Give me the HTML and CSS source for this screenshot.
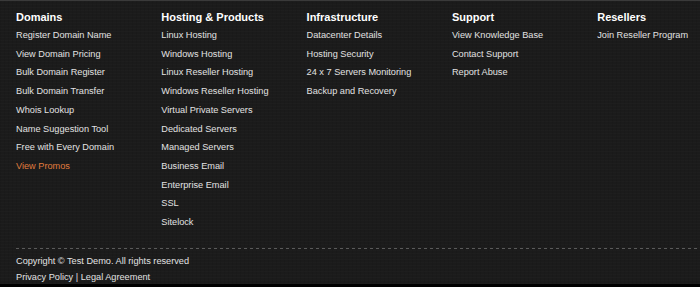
FILE: index.html
```html
<!DOCTYPE html>
<html lang="en">
<head>
    <meta charset="UTF-8">
    <meta name="viewport" content="width=device-width, initial-scale=1.0">
    <title>Footer | Test Demo</title>
    <link rel="stylesheet" href="styles.css">
</head>
<body>
    <!-- Site Footer -->
    <footer class="site-footer">
        <div class="footer-links">
            <!-- Domains -->
            <div class="footer-col">
                <h4>Domains</h4>
                <ul>
                    <li><a href="#">Register Domain Name</a></li>
                    <li><a href="#">View Domain Pricing</a></li>
                    <li><a href="#">Bulk Domain Register</a></li>
                    <li><a href="#">Bulk Domain Transfer</a></li>
                    <li><a href="#">Whois Lookup</a></li>
                    <li><a href="#">Name Suggestion Tool</a></li>
                    <li><a href="#">Free with Every Domain</a></li>
                    <li><a href="#" class="promo">View Promos</a></li>
                </ul>
            </div>
            <!-- Hosting -->
            <div class="footer-col">
                <h4>Hosting &amp; Products</h4>
                <ul>
                    <li><a href="#">Linux Hosting</a></li>
                    <li><a href="#">Windows Hosting</a></li>
                    <li><a href="#">Linux Reseller Hosting</a></li>
                    <li><a href="#">Windows Reseller Hosting</a></li>
                    <li><a href="#">Virtual Private Servers</a></li>
                    <li><a href="#">Dedicated Servers</a></li>
                    <li><a href="#">Managed Servers</a></li>
                    <li><a href="#">Business Email</a></li>
                    <li><a href="#">Enterprise Email</a></li>
                    <li><a href="#">SSL</a></li>
                    <li><a href="#">Sitelock</a></li>
                </ul>
            </div>
            <!-- Infrastructure -->
            <div class="footer-col">
                <h4>Infrastructure</h4>
                <ul>
                    <li><a href="#">Datacenter Details</a></li>
                    <li><a href="#">Hosting Security</a></li>
                    <li><a href="#">24 x 7 Servers Monitoring</a></li>
                    <li><a href="#">Backup and Recovery</a></li>
                </ul>
            </div>
            <!-- Support -->
            <div class="footer-col">
                <h4>Support</h4>
                <ul>
                    <li><a href="#">View Knowledge Base</a></li>
                    <li><a href="#">Contact Support</a></li>
                    <li><a href="#">Report Abuse</a></li>
                </ul>
            </div>
            <!-- Resellers -->
            <div class="footer-col">
                <h4>Resellers</h4>
                <ul>
                    <li><a href="#">Join Reseller Program</a></li>
                </ul>
            </div>
        </div>
        <!-- Bottom bar -->
        <div class="footer-bottom">
            <p>Copyright &copy; Test Demo. All rights reserved</p>
            <p><a href="#">Privacy Policy</a> | <a href="#">Legal Agreement</a></p>
        </div>
    </footer>
</body>
</html>
```

FILE: styles.css
```css
/* General styling */
* {
    margin: 0;
    padding: 0;
    box-sizing: border-box;
}
body {
    font-family: "Liberation Sans", Arial, sans-serif;
    background-color: #000;
    color: #e2e2e2;
}
a {
    color: #e2e2e2;
    text-decoration: none;
}

/* Footer */
.site-footer {
    height: 284px;
    border-top: 1px solid #3a3a3a;
    background-color: #1b1b1b;
    background-image:
        repeating-linear-gradient(0deg, rgba(255, 255, 255, 0.012) 0 1px, transparent 1px 3px),
        repeating-linear-gradient(90deg, rgba(0, 0, 0, 0.06) 0 1px, transparent 1px 4px);
}
.footer-links {
    display: grid;
    grid-template-columns: repeat(4, 145.3px) 1fr;
    padding: 9px 0 0 16px;
    height: 247px;
}
.footer-col h4 {
    font-size: 11px;
    font-weight: 700;
    line-height: 14px;
    color: #fff;
}
.footer-col ul {
    list-style: none;
    margin-top: 2px;
}
.footer-col li {
    font-size: 9.2px;
    line-height: 18.7px;
}
.footer-col .promo {
    color: #e07c3e;
}

/* Bottom bar */
.footer-bottom {
    margin-left: 16px;
    padding-top: 5px;
    background-image: linear-gradient(90deg, #5a5a5a 0 3px, transparent 3px 6px);
    background-size: 6px 1px;
    background-repeat: repeat-x;
    font-size: 9.2px;
    line-height: 16px;
}
```
